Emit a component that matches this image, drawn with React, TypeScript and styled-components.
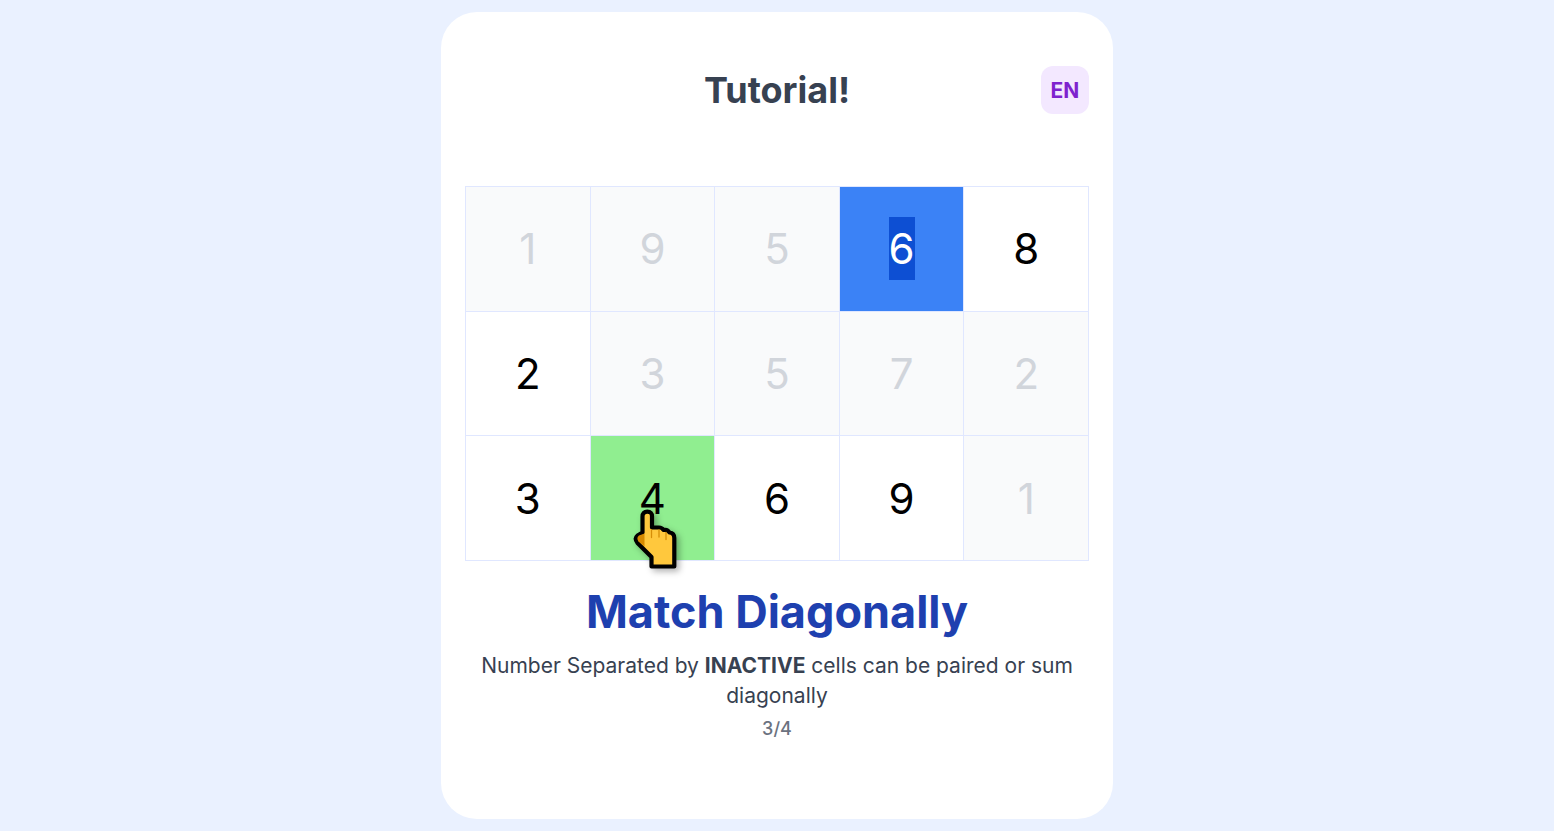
import React from 'react';
import styled, { createGlobalStyle, css } from 'styled-components';

const GlobalStyle = createGlobalStyle`
  *, *::before, *::after { box-sizing: border-box; }
  body {
    margin: 0;
    background: #eaf1ff;
    font-family: Inter, "Liberation Sans", sans-serif;
  }
`;

const Page = styled.div`
  display: flex;
  justify-content: center;
  min-height: 100vh;
  padding: 12px;
`;

const Card = styled.main`
  width: 100%;
  max-width: 672px;
  padding: 54px 24px;
  border-radius: 36px;
  background: #fff;
`;

const Header = styled.header`
  display: grid;
  grid-template-columns: 48px 1fr 48px;
  align-items: center;
  margin-bottom: 72px;
`;

const Title = styled.h1`
  grid-column: 2;
  margin: 0;
  font-size: 36px;
  line-height: 48px;
  font-weight: 700;
  text-align: center;
  color: #374151;
`;

const LanguageButton = styled.button`
  width: 48px;
  height: 48px;
  padding: 0;
  border: 0;
  border-radius: 12px;
  background: #f3e8ff;
  color: #7e22ce;
  font: inherit;
  font-size: 21px;
  font-weight: 700;
  cursor: pointer;
`;

const Board = styled.div`
  display: grid;
  grid-template-columns: repeat(5, 1fr);
  gap: 1px;
  border: 1px solid #e0e7ff;
  background: #e0e7ff;
`;

type CellState = 'open' | 'inactive' | 'selected' | 'target';

const cellColors = {
  open: css`background: #fff; color: #000;`,
  inactive: css`background: #f9fafb; color: #d1d5db;`,
  selected: css`background: #3b82f6; color: #fff;`,
  target: css`background: #90ee90; color: #000;`,
};

const Cell = styled.button<{ $state: CellState }>`
  position: relative;
  display: flex;
  align-items: center;
  justify-content: center;
  aspect-ratio: 1;
  padding: 0;
  border: 0;
  font: inherit;
  font-size: 42px;
  line-height: 63px;
  ${({ $state }) => cellColors[$state]}
`;

const Highlight = styled.span`
  background: #0d4fd3;
`;

const Pointer = styled.svg`
  position: absolute;
  z-index: 1;
  top: 68px;
  left: 38px;
  width: 56px;
  height: 72px;
  pointer-events: none;
  filter: drop-shadow(3px 3px 3px rgba(0, 0, 0, 0.3));
`;

const Caption = styled.section`
  display: flex;
  flex-direction: column;
  align-items: center;
  padding-top: 24px;
  text-align: center;
`;

const Heading = styled.h2`
  margin: 0 0 12px;
  font-size: 45px;
  line-height: 54px;
  font-weight: 700;
  color: #1e40af;
`;

const Description = styled.p`
  margin: 0;
  font-size: 21px;
  line-height: 30px;
  color: #374151;
`;

const Step = styled.p`
  margin: 6px 0 0;
  font-size: 18px;
  line-height: 24px;
  font-weight: 500;
  color: #6b7280;
`;

const cells: { value: number; state: CellState }[] = [
  { value: 1, state: 'inactive' },
  { value: 9, state: 'inactive' },
  { value: 5, state: 'inactive' },
  { value: 6, state: 'selected' },
  { value: 8, state: 'open' },
  { value: 2, state: 'open' },
  { value: 3, state: 'inactive' },
  { value: 5, state: 'inactive' },
  { value: 7, state: 'inactive' },
  { value: 2, state: 'inactive' },
  { value: 3, state: 'open' },
  { value: 4, state: 'target' },
  { value: 6, state: 'open' },
  { value: 9, state: 'open' },
  { value: 1, state: 'inactive' },
];

function HandPointer() {
  return (
    <Pointer viewBox="0 0 56 72" aria-hidden="true">
      <path
        d="M13.5 12.500Q13.5 7.700 18.300 7.700T23 12.500V23.500H30Q33 23.500 34.500 26Q38.500 25 40.500 28.500Q45.300 29 45.300 34V62.500H22.500V53L8.500 39Q5 34.500 8.500 31.500L13.500 28.500Z"
        fill="#ffc83d"
        stroke="#000"
        strokeWidth="4.200"
        strokeLinejoin="round"
      />
      <path d="M15.500 29.500V42.500L9.500 37.500Q7 34 10 31.500L15.500 29.500Z" fill="#d68a00" />
      <path d="M22.500 26V33.500M30 26V33M37 28.500V35.500" fill="none" stroke="#d68f08" strokeWidth="1.300" strokeLinecap="round" />
    </Pointer>
  );
}

export default function App() {
  return (
    <>
      <GlobalStyle />
      <Page>
        <Card>
          <Header>
            <Title>Tutorial!</Title>
            <LanguageButton type="button">EN</LanguageButton>
          </Header>
          <Board>
            {cells.map(({ value, state }, index) => (
              <Cell key={index} type="button" $state={state}>
                {state === 'selected' ? <Highlight>{value}</Highlight> : value}
                {state === 'target' && <HandPointer />}
              </Cell>
            ))}
          </Board>
          <Caption>
            <Heading>Match Diagonally</Heading>
            <Description>
              Number Separated by <strong>INACTIVE</strong> cells can be paired or sum diagonally
            </Description>
            <Step>3/4</Step>
          </Caption>
        </Card>
      </Page>
    </>
  );
}
